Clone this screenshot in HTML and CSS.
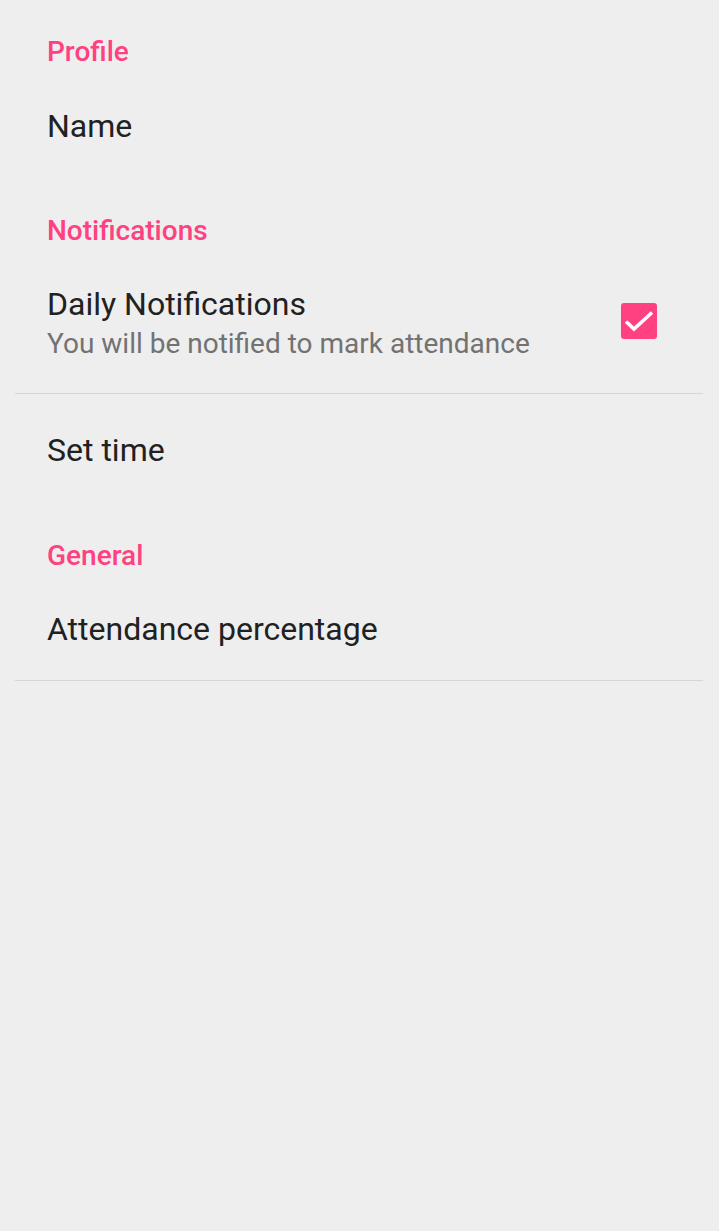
FILE: index.html
```html
<!DOCTYPE html>
<html>
<head>
<meta charset="utf-8">
<link rel="stylesheet" href="styles.css">
</head>
<body>
<div class="prefs">
  <div class="category first">Profile</div>
  <div class="item item-name"><div class="title">Name</div></div>

  <div class="category">Notifications</div>
  <div class="item item-daily">
    <div class="texts">
      <div class="title">Daily Notifications</div>
      <div class="summary">You will be notified to mark attendance</div>
    </div>
    <div class="checkbox">
      <svg width="36" height="36" viewBox="0 0 36 36"><rect x="0" y="0" width="36" height="36" rx="3" fill="#ff4081"/><path d="M5 18.5 L13 26 L31 9.5" fill="none" stroke="#fff" stroke-width="3.6"/></svg>
    </div>
  </div>
  <div class="divider"></div>
  <div class="item item-time"><div class="title">Set time</div></div>

  <div class="category">General</div>
  <div class="item item-att"><div class="title">Attendance percentage</div></div>
  <div class="divider"></div>
</div>
</body>
</html>
```

FILE: styles.css
```css
html, body {
  margin: 0;
  padding: 0;
  background: #eeeeee;
  font-family: Roboto, "Noto Sans", sans-serif;
}
.prefs {
  display: flex;
  flex-direction: column;
  width: 719px;
}
.category {
  height: 44px;
  padding-top: 30px;
  padding-left: 47px;
  display: flex;
  align-items: center;
  font-size: 28px;
  font-weight: 500;
  color: #ff4081;
}
.category.first {
  padding-top: 29px;
}
.item {
  display: flex;
  align-items: center;
  padding-left: 47px;
  padding-right: 62px;
}
.item-name { height: 105px; }
.item-daily { height: 141px; justify-content: space-between; }
.item-time { height: 107px; padding-top: 2px; }
.item-att { height: 103px; }
.texts {
  display: flex;
  flex-direction: column;
  padding-top: 2px;
}
.title {
  font-size: 32px;
  color: #212121;
  line-height: 36px;
}
.summary {
  font-size: 28px;
  color: #727272;
  line-height: 36px;
  margin-top: 4px;
}
.checkbox {
  width: 36px;
  height: 36px;
  margin-top: -4px;
}
.checkbox svg { display: block; }
.divider {
  height: 1px;
  margin: 0 16px 0 15px;
  background: #d6d6d6;
}
```
